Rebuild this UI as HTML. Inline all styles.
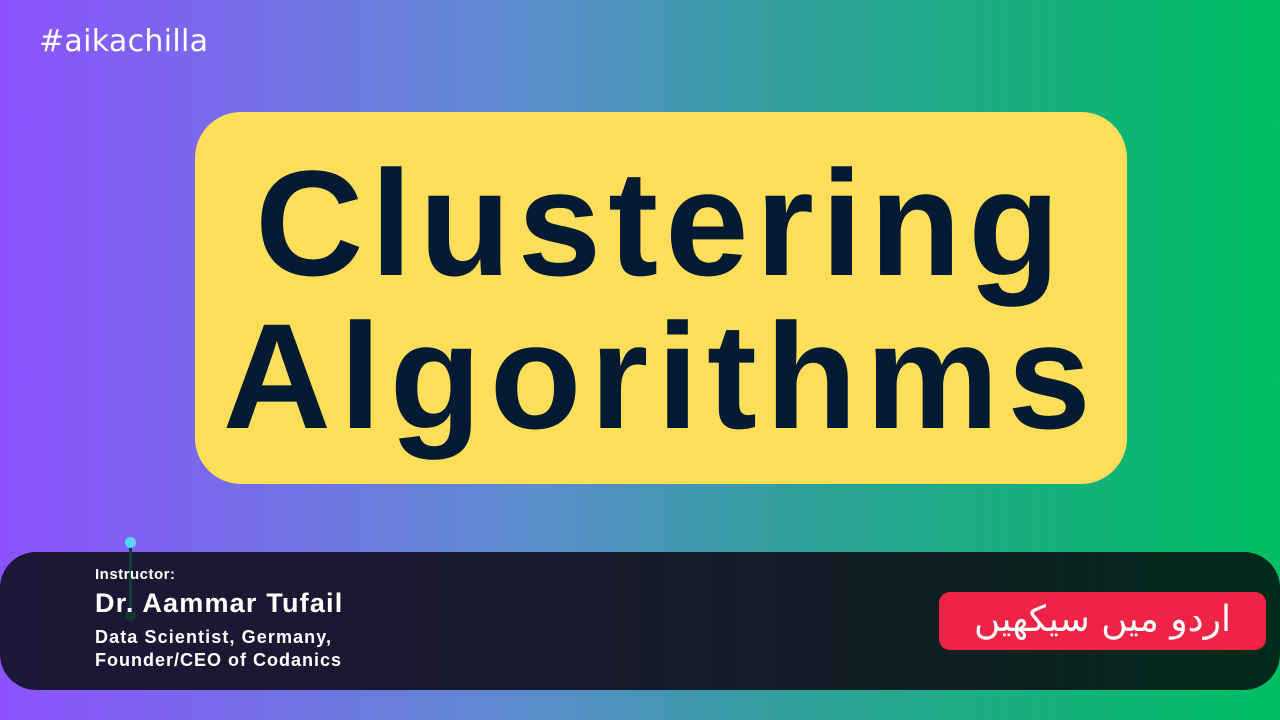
<!DOCTYPE html>
<html><head><meta charset="utf-8"><style>
*{margin:0;padding:0;box-sizing:border-box}
body{width:1280px;height:720px;overflow:hidden;position:relative;background:linear-gradient(90deg,#8c52ff 0%,#5e8bd0 40%,#2aa394 65%,#00bf63 100%);font-family:"Liberation Sans",sans-serif}
.tag{position:absolute;left:39px;top:24px;color:#fff;font-size:30px;letter-spacing:0.3px;font-family:"DejaVu Sans",sans-serif}
.box{position:absolute;left:195px;top:112px;width:932px;height:372px;background:#ffde59;border-radius:46px}
.t{position:absolute;left:0;width:100%;text-align:center;color:#031a33;font-weight:bold;font-size:150px;letter-spacing:7px;line-height:1}
.bar{position:absolute;left:0;top:552px;width:1280px;height:138px;border-radius:36px;background:linear-gradient(90deg,#1e1636 0%,#18192e 40%,#0f1e22 75%,#002a1a 100%)}
.pin{position:absolute;left:129px;top:546px;width:3px;height:70px;background:#153a3a}
.dot{position:absolute;left:125px;top:537px;width:11px;height:11px;border-radius:50%;background:#58d5f5}
.dot2{position:absolute;left:125px;top:610px;width:11px;height:11px;border-radius:50%;background:#123530}
.txt{position:absolute;left:95px;color:#fff;font-weight:bold;white-space:nowrap}
.red{position:absolute;left:939px;top:592px;width:327px;height:58px;background:#ef2346;border-radius:11px;color:#fff;font-size:36px;text-align:center;line-height:56px;font-family:"DejaVu Sans",sans-serif}
</style></head><body>
<div class="tag">#aikachilla</div>
<div class="box">
<div class="t" style="top:36px">Clustering</div>
<div class="t" style="top:189px;letter-spacing:8.5px">Algorithms</div>
</div>
<div class="bar"></div>
<div class="pin"></div><div class="dot"></div><div class="dot2"></div>
<div class="txt" style="top:566px;font-size:15px;letter-spacing:0.5px">Instructor:</div>
<div class="txt" style="top:588px;font-size:27px;letter-spacing:1.2px">Dr. Aammar Tufail</div>
<div class="txt" style="top:627px;font-size:18px;letter-spacing:1.1px">Data Scientist, Germany,</div>
<div class="txt" style="top:650px;font-size:18px;letter-spacing:1px">Founder/CEO of Codanics</div>
<div class="red" dir="rtl">اردو میں سیکھیں</div>
</body></html>
